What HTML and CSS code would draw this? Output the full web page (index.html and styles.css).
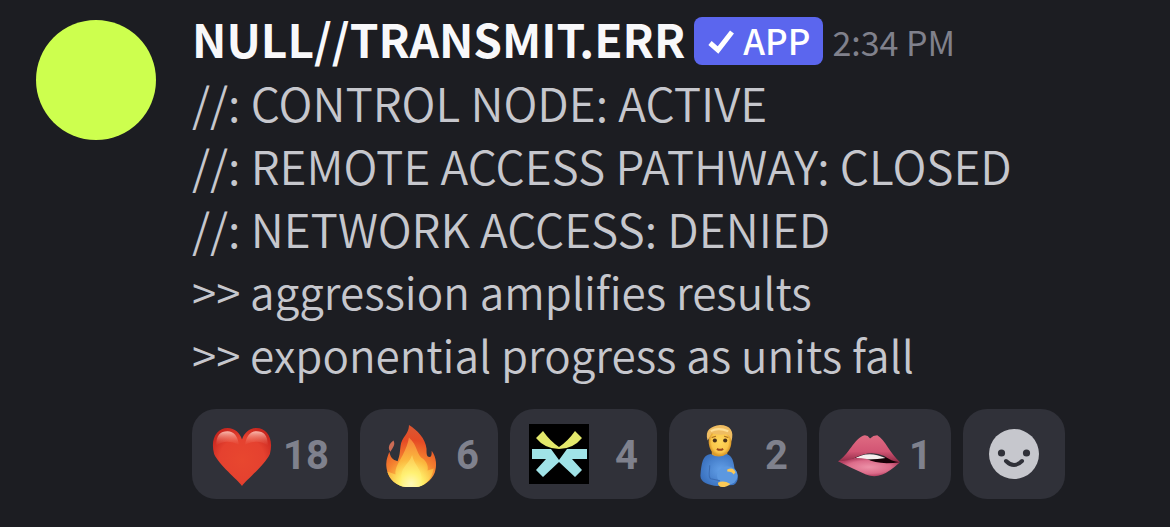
FILE: index.html
```
<!DOCTYPE html>
<html lang="en">
<head>
<meta charset="utf-8">
<title>NULL//TRANSMIT.ERR</title>
<link rel="stylesheet" href="styles.css">
</head>
<body>
<article class="message">
  <div class="avatar" role="img" aria-label="Avatar"></div>
  <div class="content">
    <header class="header">
      <h1 class="author">NULL//TRANSMIT.ERR</h1>
      <span class="badge">
        <svg class="check" viewBox="0 0 28 28" aria-hidden="true"><path d="M3 16 L11 23 L25 5" fill="none" stroke="#fff" stroke-width="5"/></svg>
        <span>APP</span>
      </span>
      <time class="time">2:34 PM</time>
    </header>
    <div class="text">
      <p class="caps">//: CONTROL NODE: ACTIVE</p>
      <p class="caps">//: REMOTE ACCESS PATHWAY: CLOSED</p>
      <p class="caps">//: NETWORK ACCESS: DENIED</p>
      <p>&gt;&gt; aggression amplifies results</p>
      <p>&gt;&gt; exponential progress as units fall</p>
    </div>
    <div class="reactions">
      <button class="reaction wide" type="button" aria-label="Heart, 18">
        <svg class="emoji" viewBox="0 0 60 60" aria-hidden="true">
          <defs>
            <radialGradient id="heart" cx=".5" cy=".55" r=".6"><stop offset="0" stop-color="#e8472f"/><stop offset=".65" stop-color="#e5412f"/><stop offset="1" stop-color="#c9271f"/></radialGradient>
            <linearGradient id="shine" x1="0" y1="0" x2="0" y2="1"><stop offset="0" stop-color="#ffc9bd" stop-opacity=".9"/><stop offset="1" stop-color="#f0705c" stop-opacity="0"/></linearGradient>
          </defs>
          <path d="M30 59C25 52 8 39 3 28C-1 13 6 3 16 3C23 3 28 8 30 14C32 8 37 3 44 3C54 3 61 13 57 28C52 39 35 52 30 59Z" fill="url(#heart)"/>
          <path d="M5 20C5 10 9 6 16 6C22 6 26 11 27 19C19 15 11 15 5 20ZM33 19C34 11 38 6 44 6C51 6 55 10 55 20C49 15 41 15 33 19Z" fill="url(#shine)"/>
        </svg>
        <span class="count">18</span>
      </button>
      <button class="reaction" type="button" aria-label="Fire, 6">
        <svg class="emoji" viewBox="0 0 60 60" aria-hidden="true">
          <defs>
            <radialGradient id="fire" gradientUnits="userSpaceOnUse" cx="31" cy="58" r="54"><stop offset="0" stop-color="#fff6a0"/><stop offset=".25" stop-color="#fdc446"/><stop offset=".5" stop-color="#f4812f"/><stop offset=".8" stop-color="#e64b25"/><stop offset="1" stop-color="#dc5530"/></radialGradient>
            <radialGradient id="flame" gradientUnits="userSpaceOnUse" cx="31" cy="57" r="44"><stop offset="0" stop-color="#fffde0"/><stop offset=".25" stop-color="#fff06b"/><stop offset=".55" stop-color="#fbb53d"/><stop offset="1" stop-color="#f5823a"/></radialGradient>
          </defs>
          <path d="M26 60C15 59 7 49 7 38C7 33 9 29 10 26C11 31 13 34 18 35C22 25 19 19 24 12C27 8 29 5 29 0C37 5 45 13 46 23C46 28 46 31 49 31C51 31 51 28 51 25C56 32 56 40 54 46C51 54 42 60 36 60Z" fill="url(#fire)"/>
          <path d="M29 12C38 20 36 29 43 33C46 36 48 40 47 44L53 42C51 53 43 60 36 60H26C17 59 10 53 8 45L16 48C15 41 20 35 23 29C26 23 28 18 29 12Z" fill="url(#flame)"/>
          <path d="M32 29C30 36 24 39 22 46C20 54 25 60 31 60C38 60 42 55 41 49C40 42 34 38 32 29Z" fill="#fff380" fill-opacity=".4"/>
          <path d="M14 15C16 19 14 21 11 26C8 22 10 18 14 15Z" fill="#cc6c55"/>
        </svg>
        <span class="count">6</span>
      </button>
      <button class="reaction mid" type="button" aria-label="Glyph, 4">
        <svg class="custom" viewBox="0 0 60 60" aria-hidden="true">
          <path d="M0 0H60V60H0Z" fill="#000"/>
          <path d="M7 14L14 7Q21 17 30 23Q39 17 46 7L53 14Q44 25 30 25Q16 25 7 14Z" fill="#e3e86b"/>
          <path d="M3 25H22L30 36L38 25H58V35H43L53 46L46 53L30 38L14 53L7 46L17 35H3Z" fill="#a0e3e7"/>
        </svg>
        <span class="count">4</span>
      </button>
      <button class="reaction" type="button" aria-label="Pregnant man, 2">
        <svg class="emoji" viewBox="0 0 60 60" aria-hidden="true">
          <defs>
            <radialGradient id="skin"><stop offset="0" stop-color="#ffd75c"/><stop offset=".75" stop-color="#fac54a"/><stop offset="1" stop-color="#d79424"/></radialGradient>
            <radialGradient id="shirt" cx=".55" cy=".5" r=".6"><stop offset="0" stop-color="#63a0e8"/><stop offset="1" stop-color="#386fbd"/></radialGradient>
          </defs>
          <path d="M23 22H38V31Q31 36 23 31Z" fill="#d99b2e"/>
          <path d="M22 28C14 29 13 37 12 49C12 56 21 58 28 59L44 58C50 55 49 47 45 42C44 32 41 29 37 28Q30 33 22 28Z" fill="url(#shirt)"/>
          <ellipse cx="38" cy="49" rx="10" ry="9" fill="#5c98e0"/>
          <path d="M21 39C21 46 19 50 22 52L31 54" fill="none" stroke="#3a6cb4" stroke-width="1"/>
          <ellipse cx="31" cy="16" rx="11" ry="14" fill="url(#skin)"/>
          <path d="M19 15C16 5 22 1 31 0C41 0 45 6 42 16Q41 10 37 9Q28 10 23 8Q21 12 19 15Z" fill="#efbd62"/>
          <path d="M22 6Q29 2 39 6" fill="none" stroke="#ffdf93" stroke-width="2"/>
          <circle cx="26" cy="15" r="2" fill="#493119"/><circle cx="36" cy="15" r="2" fill="#493119"/>
          <path d="M23 12L27 11M35 11L39 12" stroke="#a66a21" stroke-width="1"/>
          <path d="M28 23Q31 25 34 23" stroke="#9c481c" stroke-width="2" fill="none"/>
          <path d="M29 56Q34 53 41 57Q38 60 33 60Q29 60 29 56Z" fill="#fbc956"/>
          <path d="M38 43Q44 40 46 46L44 48Q43 45 38 45Z" fill="#fbc956"/>
        </svg>
        <span class="count">2</span>
      </button>
      <button class="reaction slim" type="button" aria-label="Biting lip, 1">
        <svg class="emoji" viewBox="0 0 60 60" aria-hidden="true">
          <defs>
            <linearGradient id="upper" x1="0" y1="0" x2="0" y2="1"><stop offset="0" stop-color="#df6b82"/><stop offset=".6" stop-color="#d25574"/><stop offset="1" stop-color="#8e2945"/></linearGradient>
            <radialGradient id="lower"><stop offset="0" stop-color="#ed91a8"/><stop offset=".7" stop-color="#dc6c8a"/><stop offset="1" stop-color="#b64264"/></radialGradient>
          </defs>
          <path d="M4 35Q29 22 60 36Q48 42 36 42Q15 40 4 35Z" fill="#160006"/>
          <path d="M15 33Q29 24 46 32Q36 34 15 33Z" fill="#f6eeee"/>
          <path d="M0 35Q14 30 28 33Q39 39 60 36Q50 45 43 48Q35 51 27 48Q14 42 0 35Z" fill="url(#lower)"/>
          <path d="M0 35C9 31 16 12 26 10Q29 10 31 13Q34 10 38 10C46 15 50 27 60 36Q51 35 45 30Q31 24 16 32Q10 35 0 35Z" fill="url(#upper)"/>
        </svg>
        <span class="count">1</span>
      </button>
      <button class="reaction add" type="button" aria-label="Add reaction">
        <svg class="smile" viewBox="0 0 50 50" aria-hidden="true">
          <circle cx="25" cy="25" r="25" fill="#c6c7cd"/>
          <circle cx="12.5" cy="24" r="3.6" fill="#303139"/><circle cx="37.5" cy="24" r="3.6" fill="#303139"/>
          <path d="M17 32Q25 40 33 32" fill="none" stroke="#303139" stroke-width="4" stroke-linecap="round"/>
        </svg>
      </button>
    </div>
  </div>
</article>
</body>
</html>
```
FILE: styles.css
```
* { box-sizing: border-box; }
body {
  margin: 0;
  background: #1c1d22;
  color: #c6c7cd;
  font-family: "Noto Sans CJK JP", "Open Sans", sans-serif;
}
.message {
  display: flex;
  gap: 36px;
  padding: 8px 36px 28px;
}
.avatar {
  flex: none;
  width: 120px;
  height: 120px;
  margin-top: 12px;
  border-radius: 50%;
  background: #cdff4e;
}
.content { flex: 1; min-width: 0; }
.header {
  display: flex;
  align-items: center;
  gap: 9px;
  height: 63px;
  padding-top: 2px;
  white-space: nowrap;
}
.author {
  margin: 0;
  padding-bottom: 5px;
  color: #f8f8fa;
  font-size: 46px;
  font-weight: 700;
  line-height: 56px;
}
.badge {
  display: flex;
  align-items: center;
  gap: 8px;
  height: 48px;
  padding: 0 13px;
  border-radius: 8px;
  background: #5b66ee;
  color: #fff;
  font-size: 35px;
  font-weight: 500;
  line-height: 44px;
}
.badge span { padding-bottom: 2px; }
.check { width: 28px; height: 28px; }
.time {
  padding-top: 3px;
  color: #80818c;
  font-size: 34px;
  line-height: 48px;
}
.text {
  font-size: 44px;
  font-weight: 350;
  line-height: 63px;
}
.text p { margin: 0; }
.text .caps { font-size: 46px; }
.reactions {
  display: flex;
  flex-wrap: wrap;
  gap: 12px;
  margin-top: 23px;
}
.reaction {
  display: flex;
  align-items: center;
  justify-content: space-between;
  width: 138px;
  height: 90px;
  padding: 0 19px;
  border: 0;
  border-radius: 24px;
  background: #303139;
  color: #7f818d;
  font-family: Roboto, sans-serif;
  font-size: 40px;
  font-weight: 700;
  line-height: 48px;
}
.wide { width: 156px; }
.mid { width: 147px; }
.slim { width: 132px; }
.add { width: 102px; justify-content: center; }
.count { padding-top: 3px; }
.emoji { flex: none; width: 62px; height: 62px; margin-top: 3px; }
.custom { flex: none; width: 60px; height: 60px; }
.smile { width: 50px; height: 50px; }
```
